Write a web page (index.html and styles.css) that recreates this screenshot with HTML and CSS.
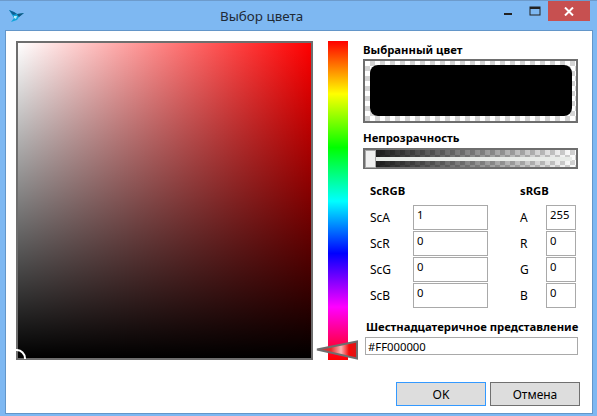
FILE: index.html
```html
<!DOCTYPE html>
<html lang="ru">
<head>
    <meta charset="UTF-8">
    <meta name="viewport" content="width=device-width, initial-scale=1.0">
    <title>Выбор цвета</title>
    <link rel="stylesheet" href="styles.css">
</head>
<body>
    <div class="window">
        <div class="titlebar">
            <svg class="app-icon" width="16" height="14" viewBox="0 0 16 14">
                <polygon points="0,1 5,3 8,5 15,4 10,8 8,11 2,13 5,9 3,6" fill="#12a5dc"/>
                <polygon points="0,1 5,3 8,5 4,6" fill="#0f5f94"/>
                <polygon points="8,5 15,4 10,8 9,7" fill="#17567f"/>
                <polygon points="5,7 8,7 7,10 5,9" fill="#b9ecf7"/>
            </svg>
            <span class="title">Выбор цвета</span>
            <div class="controls">
                <svg class="ctl" width="26" height="20" viewBox="0 0 26 20"><rect x="9" y="12" width="8" height="2" fill="#222"/></svg>
                <svg class="ctl" width="27" height="20" viewBox="0 0 27 20"><rect x="9" y="6" width="10" height="8" fill="none" stroke="#222"/><rect x="9" y="6" width="10" height="2" fill="#222"/></svg>
                <div class="close">
                    <svg width="10" height="9" viewBox="0 0 10 9"><path d="M1 0.5L9 8.5M9 0.5L1 8.5" stroke="#fff" stroke-width="2"/></svg>
                </div>
            </div>
        </div>
        <div class="client">
            <div class="main">
                <div class="field">
                    <svg class="field-cursor" width="11" height="11" viewBox="0 0 11 11"><path d="M0 1A8.5 8.5 0 0 1 9 10" fill="none" stroke="#fff" stroke-width="2"/></svg>
                </div>
                <div class="hue">
                    <svg class="hue-cursor" width="44" height="20" viewBox="0 0 44 20">
                        <defs>
                            <linearGradient id="cursorFill" x1="0" y1="0" x2="1" y2="0">
                                <stop offset="0" stop-color="#b04a4a"/>
                                <stop offset="0.35" stop-color="#e82a2a"/>
                                <stop offset="0.6" stop-color="#f9b4b4"/>
                                <stop offset="0.8" stop-color="#f80808"/>
                                <stop offset="1" stop-color="#d81818"/>
                            </linearGradient>
                        </defs>
                        <polygon points="2,9.5 42,1.5 42,18.5" fill="url(#cursorFill)" stroke="#6e6e6e" stroke-width="2"/>
                    </svg>
                </div>
                <div class="side">
                    <div class="caption">Выбранный цвет</div>
                    <div class="swatch checker">
                        <div class="swatch-color"></div>
                    </div>
                    <div class="caption opacity-caption">Непрозрачность</div>
                    <div class="slider checker">
                        <div class="slider-fade"></div>
                        <div class="slider-track"></div>
                        <div class="slider-thumb"></div>
                    </div>
                    <div class="values">
                        <b class="heading">ScRGB</b>
                        <b class="heading heading-s">sRGB</b>

                        <span>ScA</span>
                        <input class="box" type="text" value="1">
                        <span class="label-s">A</span>
                        <input class="box" type="text" value="255">

                        <span>ScR</span>
                        <input class="box" type="text" value="0">
                        <span class="label-s">R</span>
                        <input class="box" type="text" value="0">

                        <span>ScG</span>
                        <input class="box" type="text" value="0">
                        <span class="label-s">G</span>
                        <input class="box" type="text" value="0">

                        <span>ScB</span>
                        <input class="box" type="text" value="0">
                        <span class="label-s">B</span>
                        <input class="box" type="text" value="0">
                    </div>
                    <div class="caption hex-caption">Шестнадцатеричное представление</div>
                    <input class="hex" type="text" value="#FF000000">
                </div>
            </div>
            <div class="footer">
                <button class="btn btn-default">OK</button>
                <button class="btn">Отмена</button>
            </div>
        </div>
    </div>
</body>
</html>
```

FILE: styles.css
```css
html, body {
    margin: 0;
    padding: 0;
}
body {
    background-color: #7eb8f2;
    font-family: "Noto Sans", "Open Sans", sans-serif;
    font-size: 12px;
    color: #000;
    overflow: hidden;
}
.window {
    width: 597px;
    height: 416px;
    box-sizing: border-box;
    border-top: 1px solid #6d9bcc;
    display: flex;
    flex-direction: column;
}
.titlebar {
    height: 29px;
    display: flex;
    align-items: flex-start;
    padding: 0 7px 0 9px;
}
.app-icon {
    margin-top: 8px;
}
.title {
    margin-left: 195px;
    margin-top: 5px;
    font-size: 13.4px;
    line-height: 20px;
    color: #1f2a36;
}
.controls {
    margin-left: auto;
    display: flex;
}
.ctl {
    display: block;
}
.close {
    width: 42px;
    height: 20px;
    background-color: #c75050;
    display: flex;
    align-items: center;
    justify-content: center;
}
.client {
    margin: 0 4px 2px 5px;
    flex: 1;
    background-color: #fff;
    border: 1px solid #6396c9;
    padding: 10px 12px 0 10px;
}
.main {
    display: flex;
    align-items: flex-start;
}
.field {
    position: relative;
    width: 297px;
    height: 319px;
    box-sizing: border-box;
    border: 2px solid #6e6e6e;
    background: linear-gradient(to top, #000, rgba(0, 0, 0, 0)), linear-gradient(to right, #fff, #f00);
}
.field-cursor {
    position: absolute;
    left: -2px;
    bottom: -2px;
}
.hue {
    position: relative;
    width: 20px;
    height: 319px;
    margin-left: 15px;
    background: linear-gradient(to bottom, #f00 0, #ff0 16.6%, #0f0 33.4%, #0ff 50.2%, #00f 66.6%, #f0f 83.4%, #f00 100%);
}
.hue-cursor {
    position: absolute;
    left: -13px;
    top: 299px;
}
.side {
    width: 215px;
    margin-left: 15px;
}
.caption {
    font-weight: bold;
    font-size: 11.3px;
    line-height: 18px;
    height: 18px;
    white-space: nowrap;
}
.checker {
    background: conic-gradient(#d4d4d4 25%, #fff 0 50%, #d4d4d4 0 75%, #fff 0) 0 0 / 10px 10px;
}
.swatch {
    height: 64px;
    box-sizing: border-box;
    border: 2px solid #6e6e6e;
    padding: 4px 4px 5px 5px;
}
.swatch-color {
    height: 100%;
    background-color: #000;
    border-radius: 8px;
}
.opacity-caption {
    margin-top: 6px;
    height: 19px;
}
.slider {
    position: relative;
    height: 21px;
    box-sizing: border-box;
    border: 2px solid #6e6e6e;
}
.slider-fade {
    height: 100%;
    background: linear-gradient(to right, rgba(0, 0, 0, 0.92), rgba(0, 0, 0, 0));
}
.slider-track {
    position: absolute;
    left: 1px;
    right: 4px;
    top: 7px;
    height: 4px;
    background-color: #e8ebe8;
}
.slider-thumb {
    position: absolute;
    left: 0;
    top: 0;
    width: 9px;
    height: 16px;
    background-color: #f0f0f0;
    border: 1px solid #a8a8a8;
}
.values {
    display: grid;
    grid-template-columns: 43px 75px 32px 26px 30px;
    grid-auto-rows: 25px;
    row-gap: 1px;
    padding-left: 7px;
    margin-top: 10px;
    align-items: center;
}
.heading {
    grid-column: 1 / span 2;
    font-size: 11.3px;
    height: 23px;
    line-height: 22px;
}
.heading-s {
    grid-column: 4 / span 2;
}
.label-s {
    grid-column: 4;
}
.box {
    width: 100%;
    height: 25px;
    box-sizing: border-box;
    border: 1px solid #a9a9a9;
    padding: 0 2px 7px 3px;
    margin: 0;
    font: 11.3px "Noto Sans", "Open Sans", sans-serif;
    color: #000;
    outline: none;
}
.hex-caption {
    margin: 10px 0 1px 3px;
}
.hex {
    display: block;
    width: 213px;
    height: 18px;
    margin-left: 2px;
    box-sizing: border-box;
    border: 1px solid #a9a9a9;
    padding: 0 2px;
    font: 11.3px "Noto Sans", "Open Sans", sans-serif;
    color: #000;
    outline: none;
}
.footer {
    display: flex;
    justify-content: flex-end;
    gap: 4px;
    margin-top: 22px;
}
.btn {
    width: 90px;
    height: 24px;
    padding: 0;
    background-color: #dddddd;
    border: 1px solid #707070;
    border-radius: 0;
    font: 12px "Noto Sans", "Open Sans", sans-serif;
    color: #000;
}
.btn-default {
    border-color: #3399ff;
}
```
